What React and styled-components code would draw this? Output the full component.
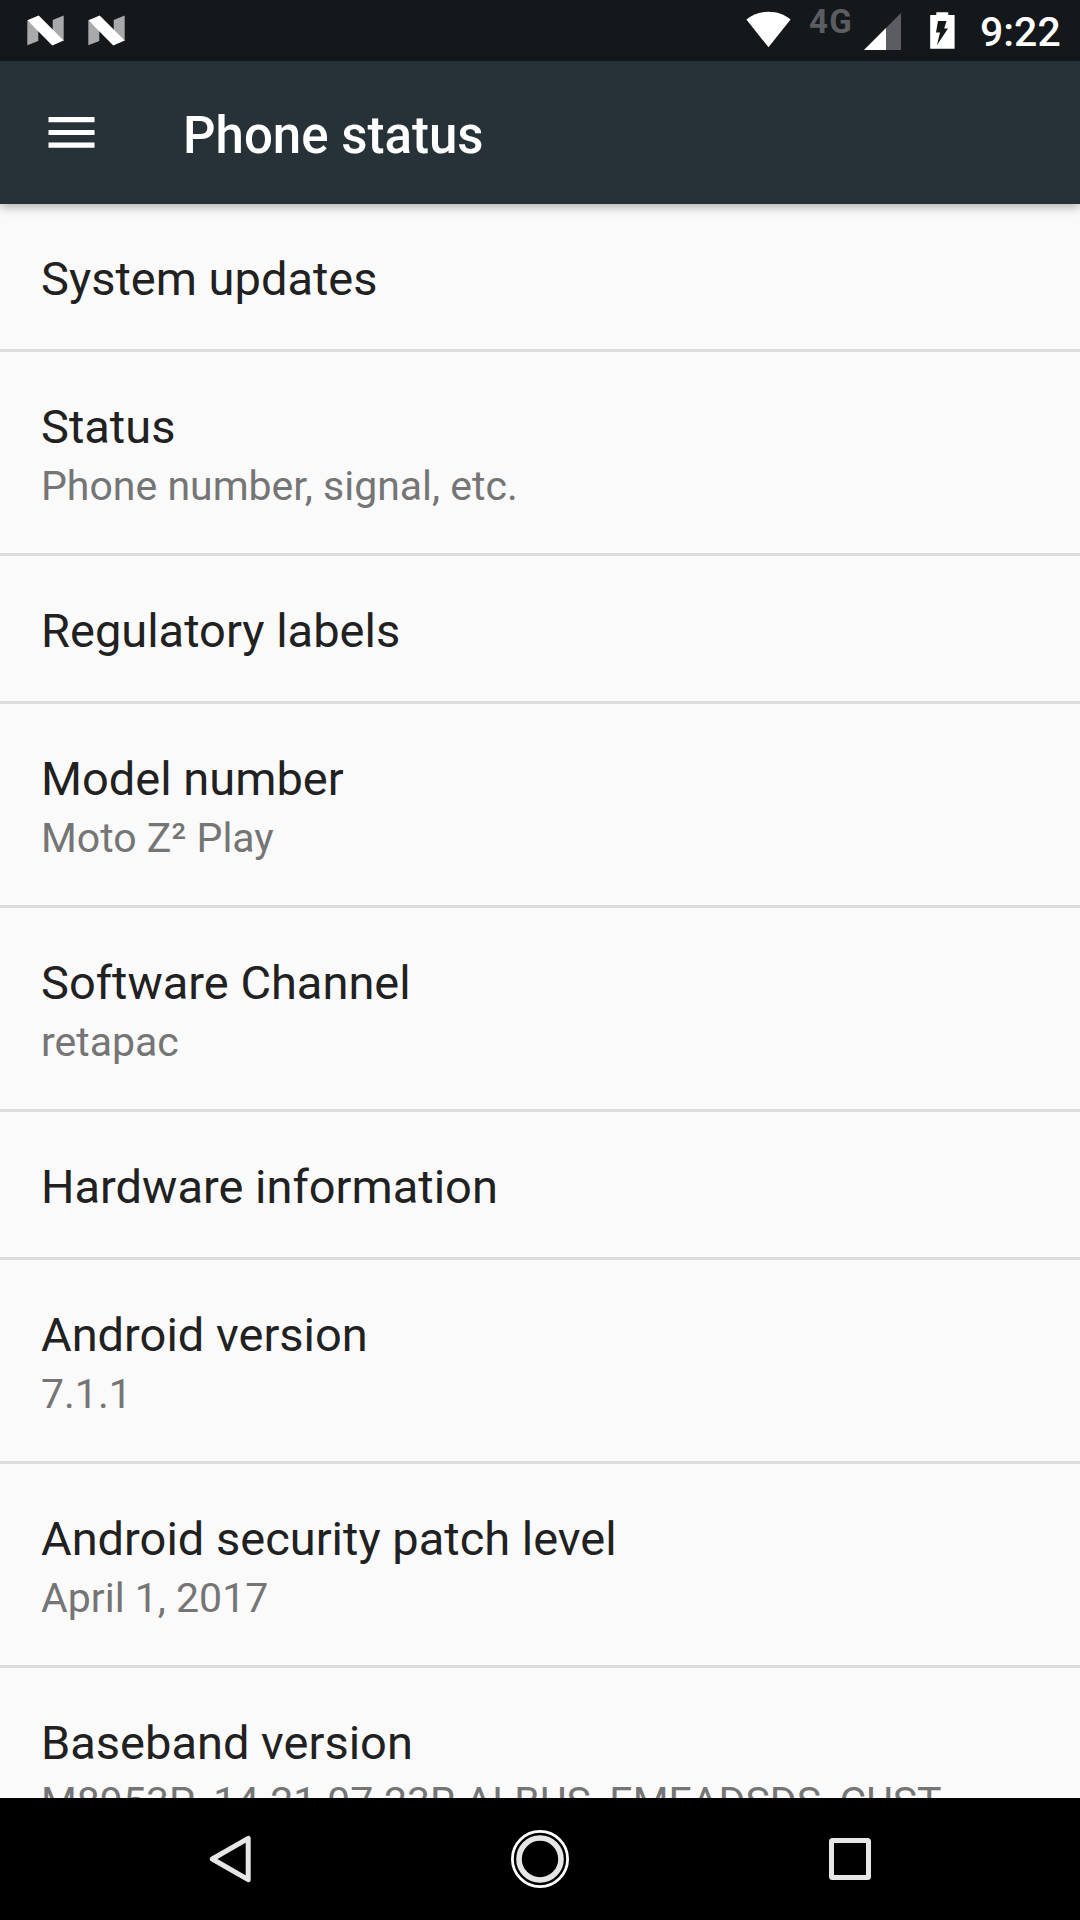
import React from 'react'
import styled, { createGlobalStyle } from 'styled-components'

const GlobalStyle = createGlobalStyle`
    * {
        box-sizing: border-box;
    }

    body {
        margin: 0;
        background-color: #000000;
    }
`

const Container = styled.div`
    width: 1080px;
    height: 1920px;
    display: flex;
    flex-direction: column;
    overflow: hidden;
    background-color: #fafafa;
    font-family: Roboto, sans-serif;
`

const StatusBar = styled.div`
    height: 61px;
    flex-shrink: 0;
    padding: 0 20px 0 27px;
    display: flex;
    justify-content: space-between;
    background-color: #14181b;
`

const Notifications = styled.div`
    display: flex;
    align-items: center;
    gap: 24px;
`

const System = styled.div`
    display: flex;
    align-items: flex-start;
`

const WifiSvg = styled.svg`
    margin: 11px 18px 0 0;
`

const Network = styled.span`
    width: 55px;
    margin-top: 3px;
    font-size: 33px;
    line-height: 38px;
    font-weight: 700;
    letter-spacing: 1.2px;
    color: #5b5d60;
`

const SignalSvg = styled.svg`
    margin: 13px 29px 0 0;
`

const BatterySvg = styled.svg`
    margin: 12px 25px 0 0;
`

const Clock = styled.span`
    width: 80px;
    margin-top: 7px;
    font-size: 41px;
    line-height: 50px;
    font-weight: 500;
    color: #ffffff;
    white-space: nowrap;
`

const AppBar = styled.header`
    position: relative;
    z-index: 1;
    height: 143px;
    flex-shrink: 0;
    padding-left: 48px;
    display: flex;
    align-items: center;
    background-color: #273238;
    box-shadow: 0 3px 10px rgba(0, 0, 0, 0.3);
`

const MenuButton = styled.button`
    display: flex;
    padding: 0;
    margin-right: 88px;
    border: none;
    background: none;
`

const Title = styled.h1`
    margin: 6px 0 0;
    font-size: 51px;
    line-height: 60px;
    font-weight: 500;
    color: #ffffff;
`

const List = styled.main`
    flex: 1;
    min-height: 0;
    overflow: hidden;
`

const Row = styled.div`
    height: ${(props) => (props.$tall ? '204px' : '148px')};
    padding: 47px 41px 0;
    border-bottom: 3px solid #dcdcdc;
    white-space: nowrap;
`

const RowTitle = styled.div`
    font-size: 47px;
    line-height: 56px;
    color: #212121;
`

const RowSummary = styled.div`
    margin-top: 6px;
    font-size: 41px;
    line-height: 50px;
    color: #757575;
`

const NavBar = styled.nav`
    height: 122px;
    flex-shrink: 0;
    display: flex;
    align-items: center;
    justify-content: center;
    gap: 248px;
    background-color: #000000;
`

const NavButton = styled.button`
    width: 60px;
    height: 60px;
    display: flex;
    padding: 0;
    border: none;
    background: none;
`

const settings = [
    { title: 'System updates' },
    { title: 'Status', summary: 'Phone number, signal, etc.' },
    { title: 'Regulatory labels' },
    { title: 'Model number', summary: 'Moto Z² Play' },
    { title: 'Software Channel', summary: 'retapac' },
    { title: 'Hardware information' },
    { title: 'Android version', summary: '7.1.1' },
    { title: 'Android security patch level', summary: 'April 1, 2017' },
    { title: 'Baseband version', summary: 'M8953P_14.21.07.23R ALBUS_EMEADSDS_CUST' },
]

const NougatIcon = () => (
    <svg width="37" height="31" viewBox="0 0 37 31">
        <path d="M0.3 5.5L11.3 15V26L0.3 30.3Z" fill="#a8a9aa" />
        <path d="M25.7 5L36.7 0.6V26L25.7 16Z" fill="#a8a9aa" />
        <path d="M0.3 5.2L11.7 0.4L36.7 25.5L25.3 30.4Z" fill="#ffffff" />
    </svg>
)

const Status = () => (
    <StatusBar>
        <Notifications>
            <NougatIcon />
            <NougatIcon />
        </Notifications>
        <System>
            <WifiSvg width="45" height="37" viewBox="0 0 45 37">
                <path d="M0.4 8.5C6.5 3.5 14 0.8 22.5 0.8S38.5 3.5 44.6 8.5L22.5 36.3Z" fill="#ffffff" />
            </WifiSvg>
            <Network>4G</Network>
            <SignalSvg width="37" height="37" viewBox="0 0 37 37">
                <path d="M37 0V37H0Z" fill="#5b5d60" />
                <path d="M22 15V37H0Z" fill="#ffffff" />
            </SignalSvg>
            <BatterySvg width="25" height="37" viewBox="0 0 25 37">
                <path d="M6.3 0.3H18.3V3H24.6V36.8H0.2V3H6.3Z" fill="#ffffff" />
                <path d="M8 9H16.5L14.2 16.5H18L7 33L10 20.5H6Z" fill="#14181b" />
            </BatterySvg>
            <Clock>9:22</Clock>
        </System>
    </StatusBar>
)

const Navigation = () => (
    <NavBar>
        <NavButton aria-label="Back">
            <svg width="60" height="60" viewBox="0 0 60 60">
                <path d="M46.2 9.3V50.7L10.3 30Z" fill="none" stroke="#e6e6e6" strokeWidth="5" strokeLinejoin="round" />
            </svg>
        </NavButton>
        <NavButton aria-label="Home">
            <svg width="60" height="60" viewBox="0 0 60 60">
                <circle cx="30" cy="30" r="27.6" fill="none" stroke="#ffffff" strokeWidth="2.8" />
                <circle cx="30" cy="30" r="21" fill="none" stroke="#e6e6e6" strokeWidth="5.6" />
            </svg>
        </NavButton>
        <NavButton aria-label="Recents">
            <svg width="60" height="60" viewBox="0 0 60 60">
                <rect x="13.5" y="11.5" width="37" height="37" rx="1" fill="none" stroke="#e6e6e6" strokeWidth="5" />
            </svg>
        </NavButton>
    </NavBar>
)

const App = () => {
    return (
        <Container>
            <GlobalStyle />
            <Status />
            <AppBar>
                <MenuButton aria-label="Menu">
                    <svg width="47" height="31" viewBox="0 0 47 31">
                        <path d="M0.5 0H46.5V5.2H0.5ZM0.5 12.9H46.5V18.1H0.5ZM0.5 25.6H46.5V30.8H0.5Z" fill="#ffffff" />
                    </svg>
                </MenuButton>
                <Title>Phone status</Title>
            </AppBar>
            <List>
                {settings.map((item) => (
                    <Row key={item.title} $tall={Boolean(item.summary)}>
                        <RowTitle>{item.title}</RowTitle>
                        {item.summary && <RowSummary>{item.summary}</RowSummary>}
                    </Row>
                ))}
            </List>
            <Navigation />
        </Container>
    )
}

export default App
